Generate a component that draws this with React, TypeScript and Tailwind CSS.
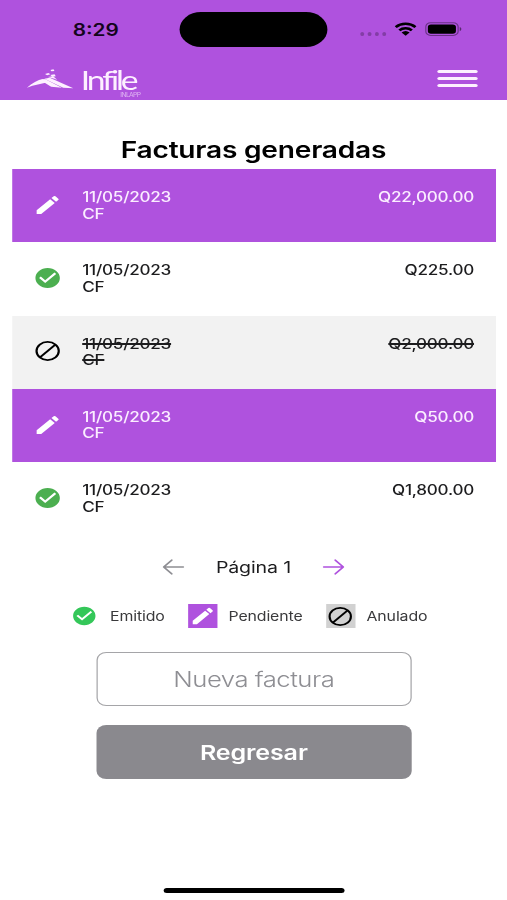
import { MdCheckCircle, MdEdit } from "react-icons/md";

type Status = "emitido" | "pendiente" | "anulado";

type Invoice = {
  id: number;
  date: string;
  client: string;
  total: string;
  status: Status;
};

const invoices: Invoice[] = [
  { id: 1, date: "11/05/2023", client: "CF", total: "Q22,000.00", status: "pendiente" },
  { id: 2, date: "11/05/2023", client: "CF", total: "Q225.00", status: "emitido" },
  { id: 3, date: "11/05/2023", client: "CF", total: "Q2,000.00", status: "anulado" },
  { id: 4, date: "11/05/2023", client: "CF", total: "Q50.00", status: "pendiente" },
  { id: 5, date: "11/05/2023", client: "CF", total: "Q1,800.00", status: "emitido" },
];

const rowStyles: Record<Status, string> = {
  emitido: "bg-white text-[#1c1c1e]",
  pendiente: "bg-[#af52de] text-[#fbeeff]",
  anulado: "bg-[#f2f2f2] text-[#1c1c1e] line-through decoration-2",
};

const BlockIcon = ({ className }: { className?: string }) => (
  <svg viewBox="0 0 24 24" fill="none" stroke="currentColor" strokeWidth="1.8" className={className}>
    <circle cx="12" cy="12" r="9.1" />
    <path d="M5.7 18.3L18.3 5.7" />
  </svg>
);

const ArrowIcon = ({ className }: { className?: string }) => (
  <svg
    viewBox="0 0 18 16"
    fill="none"
    stroke="currentColor"
    strokeWidth="1.6"
    strokeLinecap="round"
    strokeLinejoin="round"
    className={className}
  >
    <path d="M1 8h16M10.5 1.2L17 8l-6.5 6.8" />
  </svg>
);

const StatusIcon = ({ status }: { status: Status }) => {
  if (status === "pendiente") return <MdEdit className="size-6 text-white" />;
  if (status === "emitido") return <MdCheckCircle className="size-6 text-[#4caf50]" />;
  return <BlockIcon className="size-6 text-black" />;
};

const StatusBar = () => (
  <div className="flex h-[58px] items-start">
    <div className="mt-[19.5px] ml-[59.5px] w-[87.5px] text-[17px] leading-5 font-semibold text-[#14051c]">
      8:29
    </div>
    <div className="mt-3 h-[35px] w-[121px] rounded-full bg-black" />
    <div className="mt-[21.5px] ml-[26.5px] flex items-start">
      <div className="mt-[10.5px] flex gap-[2.5px]">
        {[0, 1, 2, 3].map((dot) => (
          <span key={dot} className="size-[3.5px] rounded-full bg-black/25" />
        ))}
      </div>
      {/* Wi-Fi */}
      <svg viewBox="0 0 18 14" className="ml-[6.5px] h-[14px] w-[18px]">
        <g fill="none" stroke="black" strokeWidth="2.4">
          <path d="M.9 5.1a11.6 11.6 0 0 1 16.2 0" />
          <path d="M3.9 8.3a7.3 7.3 0 0 1 10.2 0" />
        </g>
        <path d="M9 13.8L5.7 10.6a4.8 4.8 0 0 1 6.6 0z" />
      </svg>
      {/* Batería */}
      <svg viewBox="0 0 31 14" className="ml-[7px] h-[14px] w-[31px]">
        <rect x=".5" y=".8" width="26.5" height="12.6" rx="4" fill="none" stroke="black" strokeOpacity=".4" />
        <rect x="2.2" y="2.5" width="23" height="9.2" rx="2.6" />
        <path d="M28.3 5v4.2a2.3 2.3 0 0 0 0-4.2z" fillOpacity=".5" />
      </svg>
    </div>
  </div>
);

const Logo = () => (
  <div className="flex text-[#fdf0ff]">
    <svg viewBox="0 0 138 60" preserveAspectRatio="none" fill="currentColor" className="mt-[11px] h-5 w-[38px]">
      <path d="M0 56C16 42 32 33 48 30l16 10C44 44 22 48 0 56z" />
      <path d="M40 33l14-3 50 26-32-3z" />
      <path d="M52 29l16-3 70 32-30-2z" />
      <path d="M62 24l16-2 12 10-14-4z" />
      <path d="M54 15l10-3 6 4-10 3zM70 3l9-2 3 5-9 1zM70 18l12-2 4 6-11 1z" />
    </svg>
    <div className="ml-[6px] w-[49px]">
      <div className="h-[32px] text-[27.5px] leading-[44px] tracking-[-2.5px]" style={{ fontFamily: "Lato, sans-serif" }}>
        Infile
      </div>
      <div className="text-right text-[5.5px] leading-[11px] tracking-[-0.5px] opacity-60">INLAPP</div>
    </div>
  </div>
);

const Header = () => (
  <header className="h-[100px] bg-[#af52de]">
    <StatusBar />
    <div className="flex justify-between pr-6 pl-[22px]">
      <Logo />
      <button className="mt-[12px] flex h-[17px] flex-col justify-between" aria-label="Menú">
        <span className="h-[3px] w-[33px] rounded-full bg-[#fdf0ff]" />
        <span className="h-[3px] w-[33px] rounded-full bg-[#fdf0ff]" />
        <span className="h-[3px] w-[33px] rounded-full bg-[#fdf0ff]" />
      </button>
    </div>
  </header>
);

const InvoiceRow = ({ invoice }: { invoice: Invoice }) => (
  <li
    className={`flex h-[73.3px] pr-[17.5px] text-[14px] leading-[16.5px] font-medium tracking-[-0.2px] ${rowStyles[invoice.status]}`}
  >
    <div className="flex w-[57px] items-center justify-center pb-[2px]">
      <StatusIcon status={invoice.status} />
    </div>
    <div className="flex-1 pt-5">
      <div>{invoice.date}</div>
      <div>{invoice.client}</div>
    </div>
    <div className="pt-5">{invoice.total}</div>
  </li>
);

const Legend = () => (
  <div className="mt-[25px] flex h-6 items-center pl-[58px] text-[13px] tracking-[-0.1px] text-[#3a3a3c]">
    <MdCheckCircle className="size-[22px] text-[#34c759]" />
    <span className="ml-[10px] w-[64px]">Emitido</span>
    <span className="flex size-6 items-center justify-center bg-[#af52de]">
      <MdEdit className="size-[22px] text-white" />
    </span>
    <span className="ml-[9px] w-[79.5px]">Pendiente</span>
    <span className="flex size-6 items-center justify-center bg-[#d1d1d1]">
      <BlockIcon className="size-[23px] text-black" />
    </span>
    <span className="ml-[9.5px]">Anulado</span>
  </div>
);

export default function App() {
  return (
    <div className="h-[900px] w-[507px] overflow-hidden bg-white">
      {/* Lienzo de 415px estirado al ancho de la ventana */}
      <div
        className="flex h-[900px] w-[415px] origin-left scale-x-[1.2217] flex-col"
        style={{ fontFamily: "Inter, sans-serif" }}
      >
        <Header />
        <main className="flex flex-1 flex-col">
          <h1 className="mt-[34px] h-[35px] text-center text-[23px] leading-8 font-semibold tracking-[-0.18px] text-black">
            Facturas generadas
          </h1>
          <ul className="mr-[9.5px] ml-[10.3px]">
            {invoices.map((invoice) => (
              <InvoiceRow key={invoice.id} invoice={invoice} />
            ))}
          </ul>
          {/* Paginación */}
          <div className="mt-[20px] flex h-6 items-center justify-center text-[16px] tracking-[-0.1px] text-[#1c1c1e]">
            <ArrowIcon className="h-4 w-[18px] -scale-x-100 text-[#8e8e93]" />
            <span className="w-[113px] text-center">Página 1</span>
            <ArrowIcon className="h-4 w-[18px] text-[#af52de]" />
          </div>
          <Legend />
          <div className="mt-6 flex flex-col gap-[19px] pr-[78.5px] pl-[79px]">
            <button className="h-[54px] rounded-lg border border-[#a5a5a8] text-[21px] font-light tracking-[-0.4px] text-[#8e8e93]">
              Nueva factura
            </button>
            <button className="h-[54px] rounded-lg bg-[#8a898e] pt-px text-[20.5px] font-semibold tracking-[-0.1px] text-white">
              Regresar
            </button>
          </div>
        </main>
        <div className="mx-auto mb-[7.5px] h-[5px] w-[148px] rounded-full bg-black" />
      </div>
    </div>
  );
}
